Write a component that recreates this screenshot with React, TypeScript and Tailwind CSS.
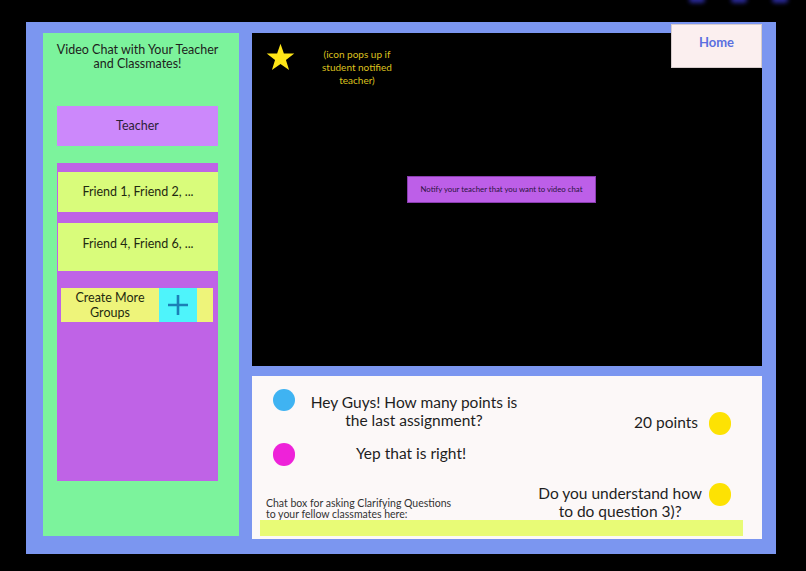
import React from 'react';

const font = { fontFamily: 'Lato, "Open Sans", sans-serif' };

function Star() {
  return (
    <svg viewBox="0 0 24 23" className="w-[29px] h-[28px]" aria-hidden="true">
      <path d="M12 0.5 L14.8 8.6 L23.4 8.7 L16.5 13.9 L19.1 22.2 L12 17.2 L4.9 22.2 L7.5 13.9 L0.6 8.7 L9.2 8.6 Z" fill="#ffe617" />
    </svg>
  );
}

function Plus() {
  return (
    <svg viewBox="0 0 24 24" className="w-[24px] h-[24px]" aria-hidden="true">
      <path d="M12 2 V22 M2 12 H22" stroke="#1b7fb6" strokeWidth="2.6" fill="none" />
    </svg>
  );
}

function Sidebar() {
  return (
    <div className="w-[196px] h-[503px] bg-[#7cf39c] pt-[10px] pl-[14px] shrink-0">
      <div className="w-[161px] text-center text-[12.5px] leading-[14px] text-[#1d1d1d]">
        <p className="whitespace-nowrap -mx-4">Video Chat with Your Teacher</p>
        <p>and Classmates!</p>
      </div>

      <div className="mt-[35px] w-[161px] h-[40px] bg-[#cc88fb] flex items-center justify-center text-[12.5px] text-[#2c1f3a]">
        Teacher
      </div>

      <div className="mt-[17px] w-[161px] h-[318px] bg-[#bf63e6] pt-[9px]">
        <div className="ml-[1px] h-[40px] bg-[#d9fc7b] flex items-center justify-center text-[12.5px] text-[#1f2a10]">
          Friend 1, Friend 2, ...
        </div>
        <div className="mt-[11px] ml-[1px] h-[48px] bg-[#d9fc7b] flex items-center justify-center pb-[6px] text-[12.5px] text-[#1f2a10]">
          Friend 4, Friend 6, ...
        </div>
        <div className="mt-[17px] ml-[4px] w-[152px] h-[34px] bg-[#eef47a] flex">
          <div className="w-[98px] flex items-center justify-center text-center text-[12.5px] leading-[15px] text-[#1f2a10]">
            Create More
            <br />
            Groups
          </div>
          <div className="w-[38px] bg-[#4ef4fb] flex items-center justify-center">
            <Plus />
          </div>
        </div>
      </div>
    </div>
  );
}

function VideoPanel() {
  return (
    <div className="h-[333px] bg-black pt-[10px] pl-[14px]">
      <div className="flex items-start">
        <Star />
        <p className="ml-[12px] mt-[5px] w-[100px] text-center text-[10px] leading-[13px] text-[#dcc11f]">
          (icon pops up if
          <br />
          student notified
          <br />
          teacher)
        </p>
      </div>
      <div className="mt-[89px] ml-[141px] w-[189px] h-[27px] bg-[#bd5fe8] border border-[#8a3db0] flex items-center justify-center text-[7.8px] text-[#2a1240]">
        Notify your teacher that you want to video chat
      </div>
    </div>
  );
}

function Dot() {
  return <div className="w-[22px] h-[23px] rounded-full shrink-0 bg-[#fde203]" />;
}

function ChatPanel() {
  return (
    <div className="h-[163px] bg-[#fcf8f8] flex flex-col text-[#1e1e1e]">
      <div className="flex h-[144px]">
        <div className="w-[280px] flex flex-col pl-[21px] pt-[13px]">
          <div className="flex items-start h-[54px]">
            <div className="w-[22px] h-[22px] rounded-full bg-[#3fb3f2] shrink-0" />
            <p className="ml-[14px] mt-[4px] w-[210px] text-center text-[15.5px] leading-[18px] whitespace-nowrap">
              Hey Guys! How many points is
              <br />
              the last assignment?
            </p>
          </div>
          <div className="flex items-center h-[23px]">
            <div className="w-[22px] h-[23px] rounded-full bg-[#ee22d9] shrink-0" />
            <p className="ml-[14px] -mt-[3px] w-[204px] text-center text-[15.5px] leading-[18px] whitespace-nowrap">Yep that is right!</p>
          </div>
          <p className="mt-[32px] -ml-[7px] text-[10.5px] leading-[11px] text-[#333] whitespace-nowrap">
            Chat box for asking Clarifying Questions
            <br />
            to your fellow classmates here:
          </p>
        </div>
        <div className="flex-1 flex flex-col items-end pr-[31px] pt-[36px]">
          <div className="flex items-center">
            <p className="-mt-[3px] text-[15.5px] leading-[18px] whitespace-nowrap">20 points</p>
            <div className="ml-[11px]">
              <Dot />
            </div>
          </div>
          <div className="mt-[48px] flex items-start">
            <p className="mt-[1px] text-center text-[15.5px] leading-[18px] whitespace-nowrap">
              Do you understand how
              <br />
              to do question 3)?
            </p>
            <div className="ml-[7px]">
              <Dot />
            </div>
          </div>
        </div>
      </div>
      <div className="ml-[8px] w-[483px] h-[16px] bg-[#e8fb76]" />
    </div>
  );
}

export default function App() {
  return (
    <div className="relative w-[806px] h-[571px] bg-black overflow-hidden pt-[22px]" style={font}>
      <div className="absolute top-[-4px] left-[689px] w-[16px] h-[7px] rounded-full bg-[#3b3bd8] blur-[2px] opacity-70" />
      <div className="absolute top-[-4px] left-[731px] w-[16px] h-[7px] rounded-full bg-[#3b3bd8] blur-[2px] opacity-70" />
      <div className="absolute top-[-4px] left-[772px] w-[16px] h-[7px] rounded-full bg-[#3b3bd8] blur-[2px] opacity-70" />

      <div className="relative ml-[26px] w-[750px] h-[532px] bg-[#7b96f0] pt-[11px] pl-[17px] flex gap-[13px] items-start">
        <Sidebar />
        <div className="w-[510px] flex flex-col gap-[10px]">
          <VideoPanel />
          <ChatPanel />
        </div>

        <div className="absolute left-[645px] top-[2px] w-[91px] h-[44px] bg-[#fbefef] border border-[#d6cccc] flex justify-center pt-[8px] text-[13px] font-bold text-[#5a6fe0]">
          Home
        </div>
      </div>
    </div>
  );
}
